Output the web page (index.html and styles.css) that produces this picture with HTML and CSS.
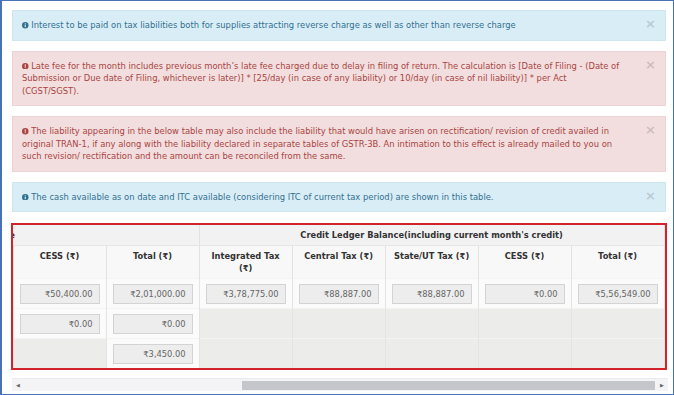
FILE: index.html
```html
<!DOCTYPE html>
<html lang="en">
	<head>
		<meta charset="UTF-8" />
		<title>Payment of Tax</title>
		<link rel="stylesheet" href="styles.css">
	</head>
	<body>
		<div class="frame">
			<div class="alert alert-info">
				<span class="close">&times;</span>
				<svg class="alert-icon" viewBox="0 0 12 12"><circle cx="6" cy="6" r="6" fill="currentColor"/><rect x="5" y="5" width="2" height="4.6" fill="#d9edf7"/><rect x="5" y="2.4" width="2" height="1.8" fill="#d9edf7"/></svg>
				Interest to be paid on tax liabilities both for supplies attracting reverse charge as well as other than reverse charge
			</div>

			<div class="alert alert-danger">
				<span class="close">&times;</span>
				<svg class="alert-icon" viewBox="0 0 12 12"><circle cx="6" cy="6" r="6" fill="currentColor"/><rect x="5" y="2.4" width="2" height="4.6" fill="#f2dede"/><rect x="5" y="7.8" width="2" height="1.8" fill="#f2dede"/></svg>
				Late fee for the month includes previous month’s late fee charged due to delay in filing of return. The calculation is [Date of Filing - (Date of Submission or Due date of Filing, whichever is later)] * [25/day (in case of any liability) or 10/day (in case of nil liability)] * per Act (CGST/SGST).
			</div>

			<div class="alert alert-danger">
				<span class="close">&times;</span>
				<svg class="alert-icon" viewBox="0 0 12 12"><circle cx="6" cy="6" r="6" fill="currentColor"/><rect x="5" y="2.4" width="2" height="4.6" fill="#f2dede"/><rect x="5" y="7.8" width="2" height="1.8" fill="#f2dede"/></svg>
				The liability appearing in the below table may also include the liability that would have arisen on rectification/ revision of credit availed in original TRAN-1, if any along with the liability declared in separate tables of GSTR-3B. An intimation to this effect is already mailed to you on such revision/ rectification and the amount can be reconciled from the same.
			</div>

			<div class="alert alert-info">
				<span class="close">&times;</span>
				<svg class="alert-icon" viewBox="0 0 12 12"><circle cx="6" cy="6" r="6" fill="currentColor"/><rect x="5" y="5" width="2" height="4.6" fill="#d9edf7"/><rect x="5" y="2.4" width="2" height="1.8" fill="#d9edf7"/></svg>
				The cash available as on date and ITC available (considering ITC of current tax period) are shown in this table.
			</div>

			<div class="ledger">
				<div class="ledger-view" id="ledgerView">
					<table class="ledger-table">
						<colgroup>
							<col class="col-desc">
							<col span="10" class="col-amt">
						</colgroup>
						<thead>
							<tr class="group-row">
								<th rowspan="2">Description</th>
								<th colspan="5" class="cash-title">Cash Ledger Balance</th>
								<th colspan="5">Credit Ledger Balance(including current month's credit)</th>
							</tr>
							<tr class="head-row">
								<th>Integrated Tax (₹)</th>
								<th>Central Tax (₹)</th>
								<th>State/UT Tax (₹)</th>
								<th>CESS (₹)</th>
								<th>Total (₹)</th>
								<th>Integrated Tax (₹)</th>
								<th>Central Tax (₹)</th>
								<th>State/UT Tax (₹)</th>
								<th>CESS (₹)</th>
								<th>Total (₹)</th>
							</tr>
						</thead>
						<tbody>
							<tr>
								<td>Tax</td>
								<td><input class="amount" readonly value="₹1,50,600.00"></td>
								<td><input class="amount" readonly value="₹0.00"></td>
								<td><input class="amount" readonly value="₹0.00"></td>
								<td><input class="amount" readonly value="₹50,400.00"></td>
								<td><input class="amount" readonly value="₹2,01,000.00"></td>
								<td><input class="amount" readonly value="₹3,78,775.00"></td>
								<td><input class="amount" readonly value="₹88,887.00"></td>
								<td><input class="amount" readonly value="₹88,887.00"></td>
								<td><input class="amount" readonly value="₹0.00"></td>
								<td><input class="amount" readonly value="₹5,56,549.00"></td>
							</tr>
							<tr>
								<td>Interest</td>
								<td><input class="amount" readonly value="₹0.00"></td>
								<td><input class="amount" readonly value="₹0.00"></td>
								<td><input class="amount" readonly value="₹0.00"></td>
								<td><input class="amount" readonly value="₹0.00"></td>
								<td><input class="amount" readonly value="₹0.00"></td>
								<td class="empty"></td>
								<td class="empty"></td>
								<td class="empty"></td>
								<td class="empty"></td>
								<td class="empty"></td>
							</tr>
							<tr>
								<td>Late Fee</td>
								<td class="empty"></td>
								<td><input class="amount" readonly value="₹1,725.00"></td>
								<td><input class="amount" readonly value="₹1,725.00"></td>
								<td class="empty"></td>
								<td><input class="amount" readonly value="₹3,450.00"></td>
								<td class="empty"></td>
								<td class="empty"></td>
								<td class="empty"></td>
								<td class="empty"></td>
								<td class="empty"></td>
							</tr>
						</tbody>
					</table>
				</div>
			</div>

			<div class="hscroll">
				<span class="hscroll-arrow">&#9664;</span>
				<div class="hscroll-track"><div class="hscroll-thumb"></div></div>
				<span class="hscroll-arrow">&#9654;</span>
			</div>
		</div>

		<script>
			// table is shown scrolled to the right end
			let ledgerView = document.querySelector("#ledgerView");
			ledgerView.scrollLeft = ledgerView.scrollWidth - ledgerView.clientWidth;
		</script>
	</body>
</html>
```

FILE: styles.css
```css
html,
body {
	margin: 0;
	background: #fff;
}

.frame {
	width: 674px;
	height: 395px;
	box-sizing: border-box;
	border: 1px solid #4772b5;
	border-left-width: 2px;
	padding: 9px 7px 0 10px;
	background: #fff;
	font-family: "DejaVu Sans", Verdana, sans-serif;
	overflow: hidden;
}

.alert {
	position: relative;
	margin-bottom: 10px;
	padding: 8px 41px 8px 9px;
	border: 1px solid transparent;
	font-size: 8.4px;
	line-height: 12.5px;
}

.alert-info {
	background: #d9edf7;
	border-color: #cfe6f1;
	color: #31708f;
}

.alert-danger {
	background: #f2dede;
	border-color: #ecd3d5;
	color: #a94442;
}

.alert-icon {
	width: 6.5px;
	height: 6.5px;
	vertical-align: -0.5px;
}

.close {
	position: absolute;
	top: 6px;
	right: 9px;
	font-size: 13px;
	line-height: 13px;
	font-weight: bold;
	color: #000;
	opacity: 0.15;
}

.ledger {
	margin: 11px -1px 0 -1px;
	border: 2px solid #d2232a;
}

.ledger-view {
	overflow: hidden;
}

.ledger-table {
	width: 1000px;
	table-layout: fixed;
	border-collapse: collapse;
	font-size: 8.3px;
	line-height: 12px;
	color: #333;
}

.col-desc {
	width: 70px;
}

.col-amt {
	width: 93px;
}

.ledger-table th {
	font-weight: bold;
	text-align: center;
	border-right: 1px solid #e2e2e2;
}

.group-row th {
	height: 20px;
	padding: 0 5px;
	background: #f2f2f2;
	border-bottom: 1px solid #e6e6e6;
}

.group-row .cash-title {
	padding-left: 4px;
}

.head-row th {
	height: 28px;
	padding: 4px 5px 0;
	vertical-align: top;
	background: #f8f8f8;
}

.ledger-table td {
	height: 29px;
	padding: 0 6px;
	background: #fbfbfb;
	border-right: 1px solid #e4e4e4;
	border-top: 1px solid #f4f4f4;
}

.ledger-table td.empty {
	background: #ecedea;
}

.amount {
	display: block;
	width: 100%;
	height: 20px;
	box-sizing: border-box;
	padding: 0 6px;
	border: 1px solid #d3d3d3;
	background: #ededed;
	font-family: "DejaVu Sans", Verdana, sans-serif;
	font-size: 8.3px;
	color: #666;
	text-align: right;
	outline: none;
}

.hscroll {
	display: flex;
	align-items: center;
	height: 12px;
	margin: 8px -2px 0 0;
	background: #f4f4f6;
	border-top: 1px solid #ebebef;
}

.hscroll-arrow {
	width: 12px;
	font-size: 5px;
	text-align: center;
	color: #666;
}

.hscroll-track {
	flex: 1;
	display: flex;
	justify-content: flex-end;
	height: 9px;
	padding-right: 1px;
}

.hscroll-thumb {
	width: 65.5%;
	height: 100%;
	background: #c5c5cc;
}
```
